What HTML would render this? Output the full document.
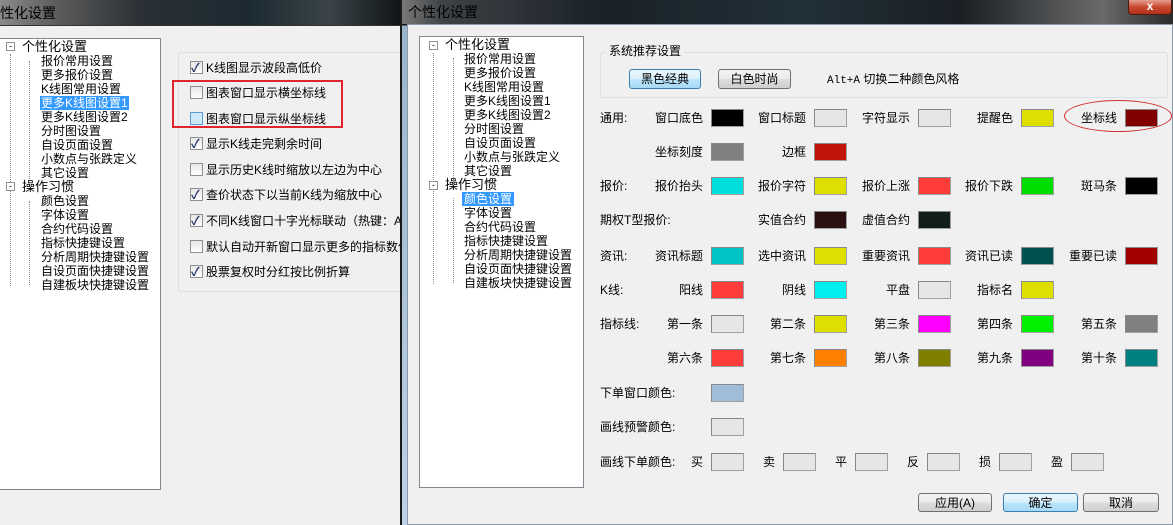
<!DOCTYPE html>
<html><head><meta charset="utf-8"><style>
*{margin:0;padding:0;box-sizing:border-box}
body{width:1173px;height:525px;overflow:hidden;background:#f0f0f0;position:relative;font-family:"Liberation Sans","SimSun","Noto Sans CJK SC",sans-serif;font-size:12px;color:#000}
.a{position:absolute;white-space:nowrap}
.t{position:absolute;white-space:nowrap;line-height:14px;font-size:12px}
.sw{position:absolute;width:33px;height:18px;border:1px solid #a0a0a0;border-top-color:#888;border-left-color:#888}
.cb{position:absolute;width:13px;height:13px;border:1px solid #8e8f8f;background:linear-gradient(#e6e6e6,#fff)}
.cb.k::after{content:"✓";position:absolute;left:0px;top:-3px;font-size:12px;color:#2a3a6a;font-weight:bold}
.btn{position:absolute;height:20px;border:1px solid #707070;border-radius:3px;background:linear-gradient(#f2f2f2,#ebebeb 50%,#dddddd 51%,#cfcfcf);text-align:center;line-height:18px}
.btn.d{border-color:#3c7fb1;background:linear-gradient(#eaf6fd,#d9f0fc 50%,#bee6fd 51%,#a7d9f5)}
.box{position:absolute;background:#fff;border:1px solid #828790}
.lbl{position:absolute;white-space:nowrap;line-height:18px}
</style></head><body>
<!-- left window -->
<div class="a" style="left:0;top:0;width:400px;height:26px;background:linear-gradient(90deg,#8a8a8a 0,#5a5a5a 60px,#2a3035 140px,#1c2a32 250px,#3a4448 330px,#101418 400px);border-bottom:1px solid #333"></div>
<div class="a" style="left:0;top:3px;font-size:14px;color:#000;line-height:20px">性化设置</div>
<div class="a" style="left:0;top:26px;width:400px;height:499px;background:#f0f0f0"></div>
<div class="box" style="left:-1px;top:38px;width:162px;height:452px"></div>
<div class="a" style="left:10px;top:54px;height:232px;border-left:1px dotted #888"></div>
<div class="a" style="left:29px;top:61px;height:126px;border-left:1px dotted #888"></div>
<div class="a" style="left:29px;top:201px;height:84px;border-left:1px dotted #888"></div>
<div class="a" style="left:6px;top:42px;width:9px;height:9px;border:1px solid #919191;background:#fff;font-size:9px;line-height:6px;text-align:center">-</div>
<div class="a" style="left:6px;top:182px;width:9px;height:9px;border:1px solid #919191;background:#fff;font-size:9px;line-height:6px;text-align:center">-</div>
<div class="t" style="left:22px;top:40px;font-size:13px">个性化设置</div>
<div class="t" style="left:41px;top:54px">报价常用设置</div>
<div class="t" style="left:41px;top:68px">更多报价设置</div>
<div class="t" style="left:41px;top:82px">K线图常用设置</div>
<div class="t" style="left:40px;top:96px;background:#3399ff;color:#fff;padding:0 1px">更多K线图设置1</div>
<div class="t" style="left:41px;top:110px">更多K线图设置2</div>
<div class="t" style="left:41px;top:124px">分时图设置</div>
<div class="t" style="left:41px;top:138px">自设页面设置</div>
<div class="t" style="left:41px;top:152px">小数点与张跌定义</div>
<div class="t" style="left:41px;top:166px">其它设置</div>
<div class="t" style="left:22px;top:180px;font-size:13px">操作习惯</div>
<div class="t" style="left:41px;top:194px">颜色设置</div>
<div class="t" style="left:41px;top:208px">字体设置</div>
<div class="t" style="left:41px;top:222px">合约代码设置</div>
<div class="t" style="left:41px;top:236px">指标快捷键设置</div>
<div class="t" style="left:41px;top:250px">分析周期快捷键设置</div>
<div class="t" style="left:41px;top:264px">自设页面快捷键设置</div>
<div class="t" style="left:41px;top:278px">自建板块快捷键设置</div>
<div class="a" style="left:178px;top:52px;width:230px;height:240px;border:1px solid #d5dfe5;border-radius:3px"></div>
<div class="cb k" style="left:190px;top:61px"></div><div class="t" style="left:206px;top:61px">K线图显示波段高低价</div>
<div class="cb" style="left:190px;top:86px"></div><div class="t" style="left:206px;top:86px">图表窗口显示横坐标线</div>
<div class="cb" style="left:190px;top:112px;background:#cfe8fa;border-color:#5b9bd5"></div><div class="t" style="left:206px;top:112px">图表窗口显示纵坐标线</div>
<div class="cb k" style="left:190px;top:137px"></div><div class="t" style="left:206px;top:137px">显示K线走完剩余时间</div>
<div class="cb" style="left:190px;top:163px"></div><div class="t" style="left:206px;top:163px">显示历史K线时缩放以左边为中心</div>
<div class="cb k" style="left:190px;top:188px"></div><div class="t" style="left:206px;top:188px">查价状态下以当前K线为缩放中心</div>
<div class="cb k" style="left:190px;top:214px"></div><div class="t" style="left:206px;top:214px">不同K线窗口十字光标联动（热键：Alt</div>
<div class="cb" style="left:190px;top:240px"></div><div class="t" style="left:206px;top:240px">默认自动开新窗口显示更多的指标数值</div>
<div class="cb k" style="left:190px;top:265px"></div><div class="t" style="left:206px;top:265px">股票复权时分红按比例折算</div>
<div class="a" style="left:172px;top:80px;width:171px;height:48px;border:2px solid #e0262c"></div>
<!-- right window -->
<div class="a" style="left:400px;top:0;width:773px;height:525px;background:linear-gradient(#1e2226,#111 25px,#9ab4cc 26px,#bcd2e6);border-left:2px solid #1a1a1a"></div>
<div class="a" style="left:402px;top:0;width:771px;height:24px;background:linear-gradient(90deg,#7a7a7a 0,#3e4246 40px,#1a2128 200px,#213038 400px,#1a1f24 560px,#6a6a6a 700px,#2a2a2a 771px)"></div>
<div class="a" style="left:408px;top:3px;font-size:14px;line-height:18px">个性化设置</div>
<div class="a" style="left:1128px;top:0;width:44px;height:15px;border:1px solid #4a1a10;border-top:0;border-radius:0 0 4px 4px;background:linear-gradient(#e8a090,#c84830 50%,#b03018);color:#fff;font-weight:bold;text-align:center;font-size:12px;line-height:12px">x</div>
<div class="a" style="left:407px;top:24px;width:766px;height:501px;background:#f0f0f0;border:1px solid #8a98a8"></div>
<div class="box" style="left:419px;top:36px;width:165px;height:452px"></div>
<div class="a" style="left:433px;top:53px;height:231px;border-left:1px dotted #888"></div>
<div class="a" style="left:453px;top:58px;height:126px;border-left:1px dotted #888"></div>
<div class="a" style="left:453px;top:198px;height:85px;border-left:1px dotted #888"></div>
<div class="a" style="left:429px;top:41px;width:9px;height:9px;border:1px solid #919191;background:#fff;font-size:9px;line-height:6px;text-align:center">-</div>
<div class="a" style="left:429px;top:181px;width:9px;height:9px;border:1px solid #919191;background:#fff;font-size:9px;line-height:6px;text-align:center">-</div>
<div class="t" style="left:445px;top:38px;font-size:13px">个性化设置</div>
<div class="t" style="left:464px;top:52px">报价常用设置</div>
<div class="t" style="left:464px;top:66px">更多报价设置</div>
<div class="t" style="left:464px;top:80px">K线图常用设置</div>
<div class="t" style="left:464px;top:94px">更多K线图设置1</div>
<div class="t" style="left:464px;top:108px">更多K线图设置2</div>
<div class="t" style="left:464px;top:122px">分时图设置</div>
<div class="t" style="left:464px;top:136px">自设页面设置</div>
<div class="t" style="left:464px;top:150px">小数点与张跌定义</div>
<div class="t" style="left:464px;top:164px">其它设置</div>
<div class="t" style="left:445px;top:178px;font-size:13px">操作习惯</div>
<div class="t" style="left:462px;top:192px;background:#3399ff;color:#fff;padding:0 2px">颜色设置</div>
<div class="t" style="left:464px;top:206px">字体设置</div>
<div class="t" style="left:464px;top:220px">合约代码设置</div>
<div class="t" style="left:464px;top:234px">指标快捷键设置</div>
<div class="t" style="left:464px;top:248px">分析周期快捷键设置</div>
<div class="t" style="left:464px;top:262px">自设页面快捷键设置</div>
<div class="t" style="left:464px;top:276px">自建板块快捷键设置</div>
<div class="a" style="left:600px;top:52px;width:568px;height:46px;border:1px solid #d5dfe5;border-radius:3px"></div>
<div class="a" style="left:606px;top:44px;background:#f0f0f0;padding:0 3px;line-height:14px">系统推荐设置</div>
<div class="btn d" style="left:629px;top:69px;width:72px">黑色经典</div>
<div class="btn" style="left:718px;top:69px;width:73px">白色时尚</div>
<div class="a" style="left:827px;top:72px;line-height:14px;font-size:12px"><span style="font-family:'Liberation Mono',monospace;font-size:11px">Alt+A</span> 切换二种颜色风格</div>

<div class="lbl" style="left:600px;top:109px">通用:</div>
<div class="lbl" style="left:655px;top:109px">窗口底色</div><div class="sw" style="left:711px;top:109px;background:#000"></div>
<div class="lbl" style="left:758px;top:109px">窗口标题</div><div class="sw" style="left:814px;top:109px;background:#e6e6e6"></div>
<div class="lbl" style="left:862px;top:109px">字符显示</div><div class="sw" style="left:918px;top:109px;background:#e6e6e6"></div>
<div class="lbl" style="left:977px;top:109px">提醒色</div><div class="sw" style="left:1021px;top:109px;background:#dede00"></div>
<div class="lbl" style="left:1081px;top:109px">坐标线</div><div class="sw" style="left:1125px;top:109px;background:#800000"></div>
<div class="a" style="left:1064px;top:100px;width:108px;height:32px;border:1.5px solid #d03030;border-radius:50%"></div>

<div class="lbl" style="left:655px;top:143px">坐标刻度</div><div class="sw" style="left:711px;top:143px;background:#808080"></div>
<div class="lbl" style="left:782px;top:143px">边框</div><div class="sw" style="left:814px;top:143px;background:#c0140c"></div>

<div class="lbl" style="left:600px;top:177px">报价:</div>
<div class="lbl" style="left:655px;top:177px">报价抬头</div><div class="sw" style="left:711px;top:177px;background:#00dede"></div>
<div class="lbl" style="left:758px;top:177px">报价字符</div><div class="sw" style="left:814px;top:177px;background:#dede00"></div>
<div class="lbl" style="left:862px;top:177px">报价上涨</div><div class="sw" style="left:918px;top:177px;background:#ff3c3c"></div>
<div class="lbl" style="left:965px;top:177px">报价下跌</div><div class="sw" style="left:1021px;top:177px;background:#00de00"></div>
<div class="lbl" style="left:1081px;top:177px">斑马条</div><div class="sw" style="left:1125px;top:177px;background:#000"></div>

<div class="lbl" style="left:600px;top:211px">期权T型报价:</div>
<div class="lbl" style="left:758px;top:211px">实值合约</div><div class="sw" style="left:814px;top:211px;background:#2a1010"></div>
<div class="lbl" style="left:862px;top:211px">虚值合约</div><div class="sw" style="left:918px;top:211px;background:#102018"></div>

<div class="lbl" style="left:600px;top:247px">资讯:</div>
<div class="lbl" style="left:655px;top:247px">资讯标题</div><div class="sw" style="left:711px;top:247px;background:#00c4c4"></div>
<div class="lbl" style="left:758px;top:247px">选中资讯</div><div class="sw" style="left:814px;top:247px;background:#dede00"></div>
<div class="lbl" style="left:862px;top:247px">重要资讯</div><div class="sw" style="left:918px;top:247px;background:#ff3c3c"></div>
<div class="lbl" style="left:965px;top:247px">资讯已读</div><div class="sw" style="left:1021px;top:247px;background:#005050"></div>
<div class="lbl" style="left:1069px;top:247px">重要已读</div><div class="sw" style="left:1125px;top:247px;background:#a00000"></div>

<div class="lbl" style="left:600px;top:281px">K线:</div>
<div class="lbl" style="left:679px;top:281px">阳线</div><div class="sw" style="left:711px;top:281px;background:#ff3c3c"></div>
<div class="lbl" style="left:782px;top:281px">阴线</div><div class="sw" style="left:814px;top:281px;background:#00eef0"></div>
<div class="lbl" style="left:886px;top:281px">平盘</div><div class="sw" style="left:918px;top:281px;background:#e6e6e6"></div>
<div class="lbl" style="left:977px;top:281px">指标名</div><div class="sw" style="left:1021px;top:281px;background:#dede00"></div>

<div class="lbl" style="left:600px;top:315px">指标线:</div>
<div class="lbl" style="left:667px;top:315px">第一条</div><div class="sw" style="left:711px;top:315px;background:#e6e6e6"></div>
<div class="lbl" style="left:770px;top:315px">第二条</div><div class="sw" style="left:814px;top:315px;background:#dede00"></div>
<div class="lbl" style="left:874px;top:315px">第三条</div><div class="sw" style="left:918px;top:315px;background:#ff00ff"></div>
<div class="lbl" style="left:977px;top:315px">第四条</div><div class="sw" style="left:1021px;top:315px;background:#00f000"></div>
<div class="lbl" style="left:1081px;top:315px">第五条</div><div class="sw" style="left:1125px;top:315px;background:#808080"></div>

<div class="lbl" style="left:667px;top:349px">第六条</div><div class="sw" style="left:711px;top:349px;background:#ff3c3c"></div>
<div class="lbl" style="left:770px;top:349px">第七条</div><div class="sw" style="left:814px;top:349px;background:#ff8000"></div>
<div class="lbl" style="left:874px;top:349px">第八条</div><div class="sw" style="left:918px;top:349px;background:#808000"></div>
<div class="lbl" style="left:977px;top:349px">第九条</div><div class="sw" style="left:1021px;top:349px;background:#800080"></div>
<div class="lbl" style="left:1081px;top:349px">第十条</div><div class="sw" style="left:1125px;top:349px;background:#008080"></div>

<div class="lbl" style="left:600px;top:384px">下单窗口颜色:</div><div class="sw" style="left:711px;top:384px;background:#a0bcd8"></div>
<div class="lbl" style="left:600px;top:418px">画线预警颜色:</div><div class="sw" style="left:711px;top:418px;background:#e6e6e6"></div>

<div class="lbl" style="left:600px;top:453px">画线下单颜色:</div>
<div class="lbl" style="left:691px;top:453px">买</div><div class="sw" style="left:711px;top:453px;background:#e6e6e6"></div>
<div class="lbl" style="left:763px;top:453px">卖</div><div class="sw" style="left:783px;top:453px;background:#e6e6e6"></div>
<div class="lbl" style="left:835px;top:453px">平</div><div class="sw" style="left:855px;top:453px;background:#e6e6e6"></div>
<div class="lbl" style="left:907px;top:453px">反</div><div class="sw" style="left:927px;top:453px;background:#e6e6e6"></div>
<div class="lbl" style="left:979px;top:453px">损</div><div class="sw" style="left:999px;top:453px;background:#e6e6e6"></div>
<div class="lbl" style="left:1051px;top:453px">盈</div><div class="sw" style="left:1071px;top:453px;background:#e6e6e6"></div>

<div class="btn" style="left:918px;top:493px;width:74px;height:19px;font-size:12px">应用(A)</div>
<div class="btn d" style="left:1003px;top:493px;width:75px;height:19px">确定</div>
<div class="btn" style="left:1083px;top:493px;width:76px;height:19px">取消</div>
</body></html>
